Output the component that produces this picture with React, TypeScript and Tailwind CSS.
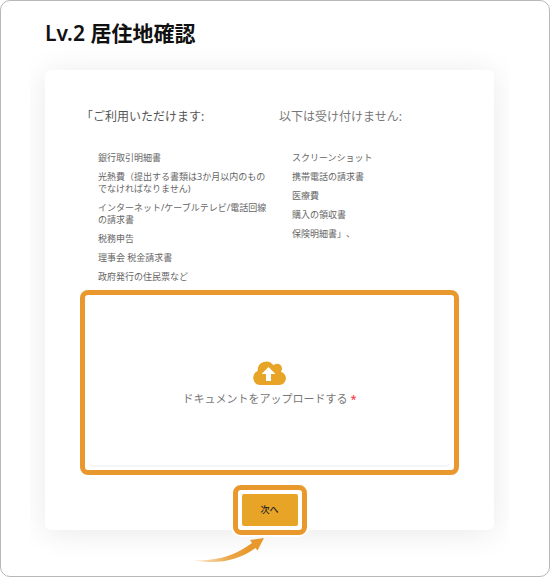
const accepted = [
  '銀行取引明細書',
  '光熱費（提出する書類は3か月以内のものでなければなりません)',
  'インターネット/ケーブルテレビ/電話回線の請求書',
  '税務申告',
  '理事会 税金請求書',
  '政府発行の住民票など',
]

const rejected = [
  'スクリーンショット',
  '携帯電話の請求書',
  '医療費',
  '購入の領収書',
  '保険明細書」、',
]

type Props = {
  title: string
  items: string[]
  titleClass: string
  listClass: string
}

const DocumentList = ({ title, items, titleClass, listClass }: Props) => {
  return (
    <div>
      <h2
        className={`text-xs leading-[18px] [text-spacing-trim:trim-start] ${titleClass}`}
      >
        {title}
      </h2>
      <ul
        className={`mt-[26px] flex flex-col gap-[7px] text-[9px] leading-3 text-[#666] [text-spacing-trim:space-all] ${listClass}`}
      >
        {items.map((item) => (
          <li key={item}>{item}</li>
        ))}
      </ul>
    </div>
  )
}

const CloudUpload = () => {
  return (
    <svg
      viewBox="0 0 33 24"
      className="h-6 w-[33px] text-[#e8a427]"
      aria-hidden="true"
    >
      <path
        d="M7.500 24 A7.300 7.300 0 0 1 4.700 10 A8.700 8.700 0 0 1 20.500 4.300 A4.600 4.600 0 0 1 27.800 10.800 A6.700 6.700 0 0 1 26.500 24 Z"
        fill="currentColor"
      />
      <path
        d="M15.500 6 L22.500 13 H18 V20 H13 V13 H8.500 Z"
        fill="white"
      />
    </svg>
  )
}

const Arrow = () => {
  return (
    <svg
      viewBox="0 0 76 28"
      className="pointer-events-none absolute top-full right-full mt-1.5 -mr-7 h-7 w-[76px]"
      aria-hidden="true"
    >
      <defs>
        <linearGradient id="tail" x1="0" x2="1" y1="0" y2="0">
          <stop offset="0" stopColor="#e8982c" stopOpacity="0.1" />
          <stop offset="0.5" stopColor="#e8982c" stopOpacity="0.85" />
          <stop offset="0.8" stopColor="#e8982c" />
        </linearGradient>
      </defs>
      <path
        d="M2 24 C26 26 46 19 62 7 L60 4 L74 2 L67.500 14.500 L65.500 12 C48 25 26 29 2 24 Z"
        fill="url(#tail)"
      />
    </svg>
  )
}

const App = () => {
  return (
    <main
      lang="ja"
      className="min-h-screen rounded-[10px] border border-[#b8b8b8] bg-white pt-[18px] font-['Noto_Sans','Noto_Sans_CJK_JP',sans-serif]"
    >
      <h1 className="ml-11 text-[21px] leading-7 font-semibold text-[#111]">
        Lv.2 居住地確認
      </h1>
      <div className="mt-[23px] mr-10 ml-[29px] overflow-x-clip px-[15px]">
        <form
          className="rounded-md bg-white px-[35px] pt-[38px] shadow-[0_3px_32px_rgba(0,0,0,0.09)]"
          onSubmit={(e) => e.preventDefault()}
        >
          <div className="grid grid-cols-[184fr_173fr] gap-2 px-[7px]">
            <DocumentList
              title="「ご利用いただけます:"
              items={accepted}
              titleClass="text-[#555]"
              listClass="pl-[11px]"
            />
            <DocumentList
              title="以下は受け付けません:"
              items={rejected}
              titleClass="text-[#777]"
              listClass="pl-[13px]"
            />
          </div>

          <div className="mt-[7px] rounded-lg border-5 border-[#e8982c] px-[3px] pb-[3px]">
            <label
              htmlFor="document"
              className="flex h-[172px] cursor-pointer flex-col items-center justify-center gap-1.5 rounded-md border-b-2 border-[#f5f5f5] pt-2 text-[11px] leading-4 text-[#777]"
            >
              <CloudUpload />
              <span>
                ドキュメントをアップロードする{' '}
                <span className="text-red-500">*</span>
              </span>
            </label>
            <input id="document" type="file" className="sr-only" />
          </div>

          <div className="mt-2.5 flex justify-center">
            <div className="relative -mb-[5px] rounded-lg border-5 border-[#e8982c] bg-white p-1 shadow-[0_0_0_2px_white]">
              <button
                type="submit"
                className="block h-8 w-14 cursor-pointer rounded-xs bg-[#e8a427] text-[9px] font-medium text-[#222]"
              >
                次へ
              </button>
              <Arrow />
            </div>
          </div>
        </form>
      </div>
    </main>
  )
}

export default App
